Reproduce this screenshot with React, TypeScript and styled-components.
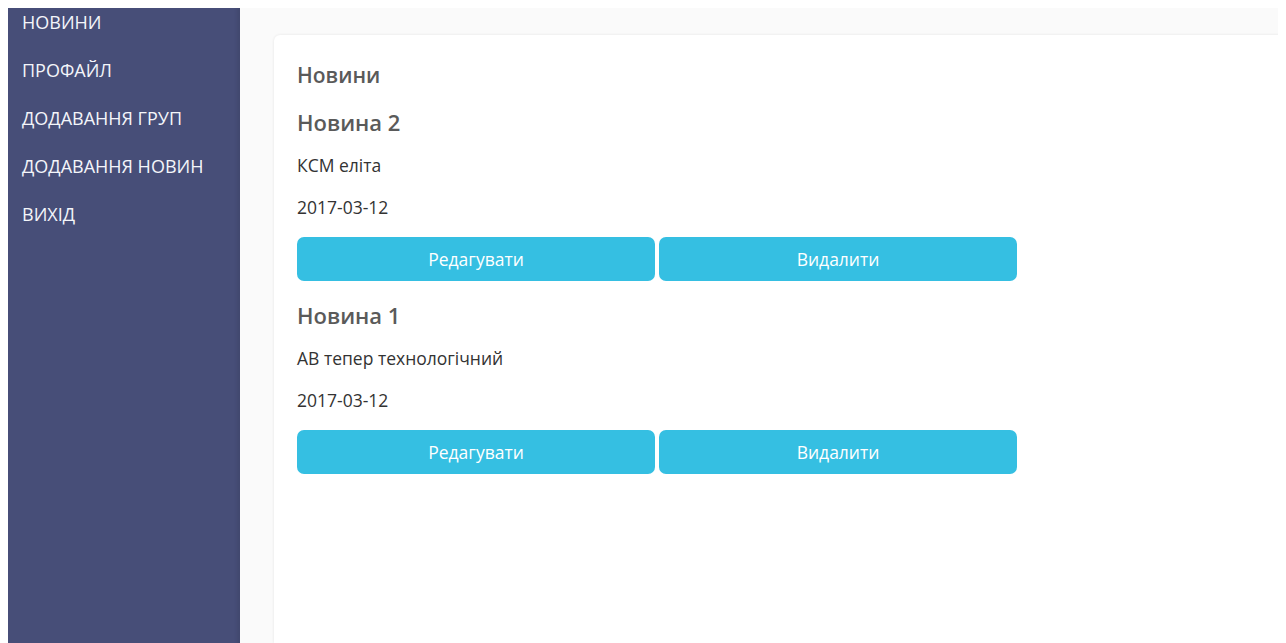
import React from "react";
import styled, { createGlobalStyle } from "styled-components";

const GlobalStyle = createGlobalStyle`
  html, body {
    height: 100%;
  }
  body {
    margin: 8px;
    background: #ffffff;
    font-family: "Open Sans", "Liberation Sans", sans-serif;
    overflow: hidden;
  }
  #root {
    height: calc(100vh - 8px);
  }
`;

const Layout = styled.div`
  display: flex;
  height: 100%;
`;

const Sidebar = styled.nav`
  width: 232px;
  flex-shrink: 0;
  background: #474e78;
  box-shadow: inset -9px 0 5px -7px rgba(0, 0, 0, 0.1);
  display: flex;
  flex-direction: column;
  padding: 2px 0 0 14px;
  box-sizing: border-box;
`;

const NavItem = styled.a`
  display: block;
  color: #f4f5fa;
  font-size: 18px;
  line-height: 24px;
  height: 48px;
  text-decoration: none;
  cursor: pointer;
`;

const Main = styled.main`
  flex: 1;
  background: #fafafa;
  padding: 27px 0 0 34px;
  min-width: 0;
  overflow: hidden;
`;

const Card = styled.section`
  background: #ffffff;
  border-radius: 6px 0 0 0;
  box-shadow: 0 0 3px rgba(0, 0, 0, 0.09);
  height: 100%;
  margin-right: -20px;
  padding: 25px 23px;
  box-sizing: border-box;
`;

const PageTitle = styled.h2`
  margin: 0 0 18px;
  font-size: 21px;
  font-weight: 600;
  line-height: 30px;
  color: #5a5a5a;
`;

const NewsTitle = styled.h3`
  margin: 0 0 17px;
  font-size: 22px;
  font-weight: 600;
  line-height: 28px;
  color: #5a5a5a;
`;

const NewsText = styled.p`
  margin: 0 0 18px;
  font-size: 17.5px;
  line-height: 24px;
  color: #333333;
`;

const Actions = styled.div`
  display: flex;
  gap: 4px;
  width: 720px;
  margin: 0 0 20px;
`;

const ActionButton = styled.button`
  flex: 1;
  height: 44px;
  border: none;
  border-radius: 7px;
  background: #35bfe2;
  color: #ffffff;
  font-family: "Open Sans", "Liberation Sans", sans-serif;
  font-size: 17.5px;
  cursor: pointer;
`;

const menu = ["НОВИНИ", "ПРОФАЙЛ", "ДОДАВАННЯ ГРУП", "ДОДАВАННЯ НОВИН", "ВИХІД"];

const news = [
  { id: 2, title: "Новина 2", text: "КСМ еліта", date: "2017-03-12" },
  { id: 1, title: "Новина 1", text: "АВ тепер технологічний", date: "2017-03-12" },
];

export default function App() {
  return (
    <>
      <GlobalStyle />
      <Layout>
        <Sidebar>
          {menu.map((item) => (
            <NavItem key={item}>{item}</NavItem>
          ))}
        </Sidebar>
        <Main>
          <Card>
            <PageTitle>Новини</PageTitle>
            {news.map((n) => (
              <div key={n.id}>
                <NewsTitle>{n.title}</NewsTitle>
                <NewsText>{n.text}</NewsText>
                <NewsText>{n.date}</NewsText>
                <Actions>
                  <ActionButton>Редагувати</ActionButton>
                  <ActionButton>Видалити</ActionButton>
                </Actions>
              </div>
            ))}
          </Card>
        </Main>
      </Layout>
    </>
  );
}
